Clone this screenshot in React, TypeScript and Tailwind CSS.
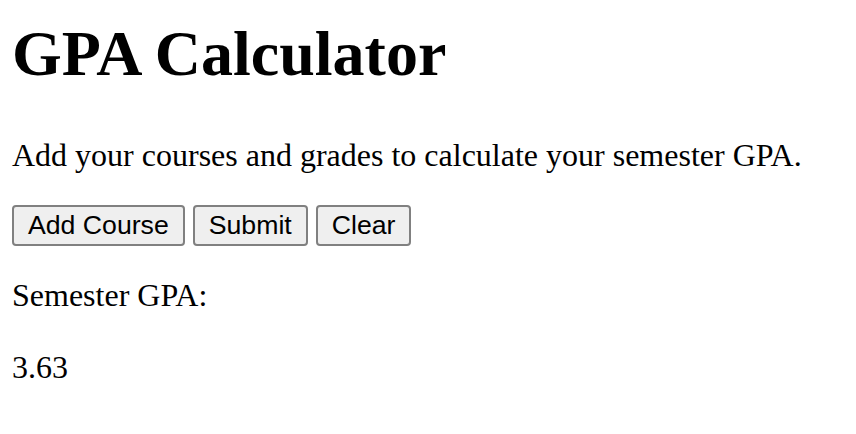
export default function App() {
  const serif = { fontFamily: '"Liberation Serif", "Times New Roman", serif' };
  const btn = "h-[41px] px-[14px] text-[26.67px] leading-none bg-[#efefef] border-2 border-[#808080] rounded-[4px] text-black";
  return (
    <div className="w-[856px] h-[434px] bg-white text-black pl-[12px]" style={serif}>
      <h1 className="pt-[22px] text-[64px] leading-[64px] font-bold m-0">GPA Calculator</h1>
      <p className="mt-[53px] text-[32px] leading-[32px]">Add your courses and grades to calculate your semester GPA.</p>
      <div className="mt-[34px] flex gap-[8px]" style={{ fontFamily: '"Liberation Sans", Arial, sans-serif' }}>
        <button className={btn}>Add Course</button>
        <button className={btn}>Submit</button>
        <button className={btn}>Clear</button>
      </div>
      <p className="mt-[33px] text-[32px] leading-[32px]">Semester GPA:</p>
      <p className="mt-[40px] text-[32px] leading-[32px]">3.63</p>
    </div>
  );
}
